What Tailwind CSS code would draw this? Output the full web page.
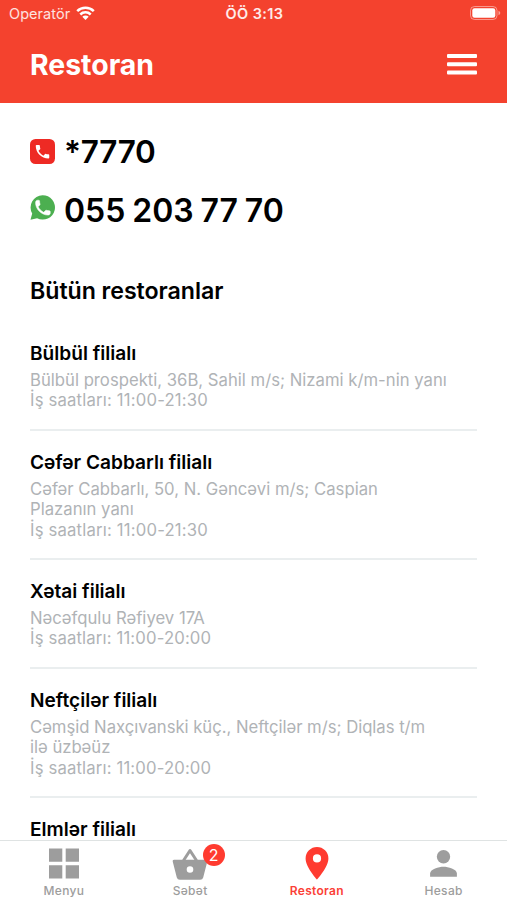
<!DOCTYPE html>
<html lang="az">
<head>
  <meta charset="UTF-8">
  <meta name="viewport" content="width=device-width, initial-scale=1.0">
  <title>Restoran</title>
  <script src="https://cdn.jsdelivr.net/npm/@tailwindcss/browser@4"></script>
</head>
<body class="bg-white text-black font-['Inter','Noto_Sans',sans-serif]">
  <div class="h-[900px] w-full overflow-hidden flex flex-col">

    <!-- header -->
    <header class="shrink-0 h-[103px] bg-[#f4422e] text-white">
      <div class="h-[27px] grid grid-cols-3 items-center pl-[9px] pr-[6px] text-[14.5px] leading-none">
        <div class="flex items-center gap-[6px]">
          <span class="pt-[1px] text-white/85 tracking-[0.05px]">Operatör</span>
          <svg class="w-[19px] h-[14px] -mt-[1px]" viewBox="0 0 19 14" fill="none" stroke="#fff" stroke-width="2.5">
            <path d="M1.2 5.2a11.8 11.8 0 0 1 16.6 0"/>
            <path d="M4.3 8.5a7.4 7.4 0 0 1 10.4 0"/>
            <path d="M9.5 14 6.3 10.8a4.6 4.6 0 0 1 6.4 0Z" fill="#fff" stroke="none"/>
          </svg>
        </div>
        <span class="justify-self-center pt-[1px] -ml-[1px] font-semibold text-white/90 tracking-[0.4px]">ÖÖ 3:13</span>
        <svg class="justify-self-end w-[31px] h-[14px] -mt-[1px]" viewBox="0 0 31 14">
          <rect x=".5" y=".5" width="26.5" height="13" rx="4" fill="none" stroke="#fff" stroke-opacity=".45"/>
          <rect x="2.3" y="2.3" width="23" height="9.4" rx="2.2" fill="#fff"/>
          <path d="M28.5 4.8q1.8.7 1.8 2.2t-1.8 2.2Z" fill="#fff" fill-opacity=".5"/>
        </svg>
      </div>
      <div class="flex items-center justify-between h-[75px] px-[30px]">
        <h1 class="pt-[2px] text-[28.4px] leading-none font-bold">Restoran</h1>
        <svg class="w-[30px] h-[21px]" viewBox="0 0 30 21" fill="#fff">
          <rect y="0" width="30" height="4" rx="1"/>
          <rect y="8.3" width="30" height="4" rx="1"/>
          <rect y="16.6" width="30" height="4" rx="1"/>
        </svg>
      </div>
    </header>

    <main class="flex-1 min-h-0 overflow-hidden px-[30px] pt-[28px]">
      <!-- phones -->
      <div class="flex items-center h-10 gap-[9px]">
        <svg class="w-[25px] h-[25px] shrink-0 mt-[1px]" viewBox="0 0 25 25">
          <rect width="25" height="25" rx="5.5" fill="#ee2a24"/>
          <path transform="translate(3.5 3.7) scale(.75)" fill="#fff" d="M6.62 10.79c1.44 2.83 3.76 5.14 6.59 6.59l2.2-2.2c.27-.27.67-.36 1.02-.24 1.12.37 2.33.57 3.57.57.55 0 1 .45 1 1V20c0 .55-.45 1-1 1-9.39 0-17-7.61-17-17 0-.55.45-1 1-1h3.5c.55 0 1 .45 1 1 0 1.25.2 2.45.57 3.57.11.35.03.74-.25 1.02l-2.2 2.2z"/>
        </svg>
        <span class="pt-[2px] text-[31.5px] leading-none font-semibold tracking-[-0.3px] whitespace-nowrap">*7770</span>
      </div>
      <div class="flex items-center h-10 gap-[9px] mt-[18px]">
        <svg class="w-[25px] h-[25px] shrink-0 -mt-[3px]" viewBox="0 0 25 25">
          <path fill="#4caf50" d="M12.5.2a12.2 12.2 0 1 1-5.4 23L.5 24.7l1.7-6.2A12.2 12.2 0 0 1 12.5.2Z"/>
          <path transform="translate(2.6 2.7) scale(.84)" fill="#fff" stroke="#fff" stroke-width=".6" stroke-linejoin="round" d="M6.62 10.79c1.44 2.83 3.76 5.14 6.59 6.59l2.2-2.2c.27-.27.67-.36 1.02-.24 1.12.37 2.33.57 3.57.57.55 0 1 .45 1 1V18.6c0 1.2-1.2 2.1-2.8 2.1C10.5 20.7 3.5 13.5 3.5 6c0-1.7.9-3 2.2-3h1.7c.55 0 .8.45.9 1 0 1.25.2 2.45.57 3.57.11.35.03.74-.25 1.02z"/>
        </svg>
        <span class="pt-[3px] text-[32px] leading-none font-semibold whitespace-nowrap [word-spacing:-1.2px]">055 203 77 70</span>
      </div>

      <h2 class="mt-[46px] h-8 text-[23.2px] leading-8 font-semibold tracking-[-0.05px] whitespace-nowrap">Bütün restoranlar</h2>

      <!-- branches -->
      <ul class="mt-[15px] text-[16.7px] leading-[20.4px] text-[#b0b3b6]">
        <li class="pt-[19px] pb-[18px] border-b-2 border-[#eaeeef]">
          <h3 class="text-[19.1px] leading-6 mb-[5px] font-semibold text-black">Bülbül filialı</h3>
          <p class="whitespace-nowrap">Bülbül prospekti, 36B, Sahil m/s; Nizami k/m-nin yanı</p>
          <p class="whitespace-nowrap tracking-[0.18px]">İş saatları: 11:00-21:30</p>
        </li>
        <li class="pt-[19px] pb-[18px] border-b-2 border-[#eaeeef]">
          <h3 class="text-[19.1px] leading-6 mb-[5px] font-semibold text-black">Cəfər Cabbarlı filialı</h3>
          <p class="whitespace-nowrap">Cəfər Cabbarlı, 50, N. Gəncəvi m/s; Caspian<br>Plazanın yanı</p>
          <p class="whitespace-nowrap tracking-[0.18px]">İş saatları: 11:00-21:30</p>
        </li>
        <li class="pt-[19px] pb-[18px] border-b-2 border-[#eaeeef]">
          <h3 class="text-[19.1px] leading-6 mb-[5px] font-semibold text-black">Xətai filialı</h3>
          <p class="whitespace-nowrap">Nəcəfqulu Rəfiyev 17A</p>
          <p class="whitespace-nowrap tracking-[0.15px]">İş saatları: 11:00-20:00</p>
        </li>
        <li class="pt-[19px] pb-[18px] border-b-2 border-[#eaeeef]">
          <h3 class="text-[19.1px] leading-6 mb-[5px] font-semibold text-black">Neftçilər filialı</h3>
          <p class="whitespace-nowrap tracking-[-0.03px]">Cəmşid Naxçıvanski küç., Neftçilər m/s; Diqlas t/m<br>ilə üzbəüz</p>
          <p class="whitespace-nowrap tracking-[0.15px]">İş saatları: 11:00-20:00</p>
        </li>
        <li class="pt-[19px]">
          <h3 class="text-[19.1px] leading-6 font-semibold text-black">Elmlər filialı</h3>
        </li>
      </ul>
    </main>

    <!-- tab bar -->
    <nav class="shrink-0 h-[60px] border-t border-[#dfe3e3] bg-white grid grid-cols-4 text-[12px] leading-4 font-medium text-[#9d9d9d] tracking-[0.3px]">
      <a class="flex flex-col items-center pt-[5px] pl-[1px]">
        <svg class="w-9 h-9" viewBox="0 0 36 36" fill="#9d9d9d">
          <path d="M3 2.5h13.3v13.3H3zM19.7 2.5H33v13.3H19.7zM3 19.2h13.3v13.3H3zM19.7 19.2H33v13.3H19.7z"/>
        </svg>
        <span class="mt-[1px]">Menyu</span>
      </a>
      <a class="relative flex flex-col items-center pt-[5px]">
        <svg class="w-9 h-9" viewBox="0 0 36 36">
          <path d="M11.5 14.5 18 4.500l6.500 10" fill="none" stroke="#9d9d9d" stroke-width="3" stroke-linejoin="round"/>
          <path fill="#9d9d9d" fill-rule="evenodd" d="M2 13.800h32q1.700 0 1.300 1.600l-4.100 16q-.6 2.300-3 2.300H7.800q-2.400 0-3-2.300l-4.100-16Q.3 13.800 2 13.800ZM18 20.200a3.300 3.300 0 1 0 0 6.600 3.300 3.300 0 0 0 0-6.600Z"/>
        </svg>
        <span class="mt-[1px]">Səbət</span>
        <span class="absolute top-[3px] left-[76px] w-[22px] h-[22px] rounded-full bg-[#ff3b30] text-white text-[16px] leading-[22px] font-normal tracking-normal text-center">2</span>
      </a>
      <a class="flex flex-col items-center pt-[5px] text-[#fb3f37]">
        <svg class="w-9 h-9" viewBox="0 0 36 36">
          <path fill="#ff3b30" fill-rule="evenodd" d="M18 1A11.4 11.4 0 0 0 6.6 12.4C6.6 21 18 33.5 18 33.5s11.4-12.5 11.4-21.1A11.4 11.4 0 0 0 18 1Zm0 7.3a4.1 4.1 0 1 1 0 8.2 4.1 4.1 0 0 1 0-8.2Z"/>
        </svg>
        <span class="mt-[1px] font-semibold">Restoran</span>
      </a>
      <a class="flex flex-col items-center pt-[5px]">
        <svg class="w-9 h-9" viewBox="0 0 36 36" fill="#9d9d9d">
          <circle cx="17.5" cy="10.8" r="6.7"/>
          <path d="M17.5 20.8c-4.5 0-13.4 2.3-13.4 6.7v3.3h26.8v-3.3c0-4.4-8.9-6.7-13.4-6.7Z"/>
        </svg>
        <span class="mt-[1px]">Hesab</span>
      </a>
    </nav>
  </div>
</body>
</html>
